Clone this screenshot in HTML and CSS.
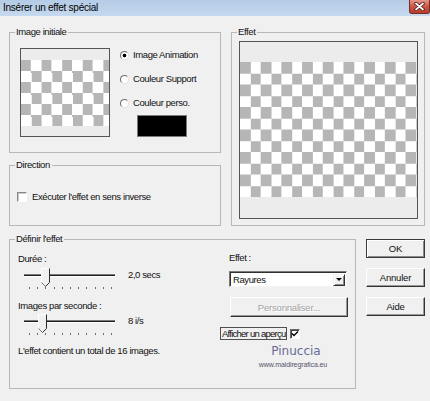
FILE: index.html
```html
<!DOCTYPE html>
<html lang="fr">
<head>
<meta charset="utf-8">
<title>Insérer un effet spécial</title>
<link rel="stylesheet" href="styles.css">
</head>
<body>
<div class="titlebar">
  <span class="title">Insérer un effet spécial</span>
  <span class="close" aria-label="Fermer">
    <svg width="11" height="9" viewBox="0 0 11 9">
      <path d="M2 1.5 L9 7.5 M9 1.5 L2 7.5" stroke="#4a1c16" stroke-width="3.4" stroke-linecap="round"/>
      <path d="M2 1.5 L9 7.5 M9 1.5 L2 7.5" stroke="#ffffff" stroke-width="1.7" stroke-linecap="round"/>
    </svg>
  </span>
</div>
<div class="content">
  <div class="top-row">
    <div class="left-col">
      <fieldset class="group">
        <legend>Image initiale</legend>
        <div class="initial-body">
          <div class="preview preview-small">
            <div class="strip strip-s1"></div>
            <div class="checker checker-small"></div>
            <div class="strip strip-s2"></div>
          </div>
          <div class="radios">
            <div class="radio-row"><span class="radio checked"></span><span>Image Animation</span></div>
            <div class="radio-row"><span class="radio"></span><span>Couleur Support</span></div>
            <div class="radio-row"><span class="radio"></span><span>Couleur perso.</span></div>
            <div class="swatch"></div>
          </div>
        </div>
      </fieldset>
      <fieldset class="group group-direction">
        <legend>Direction</legend>
        <div class="direction-body">
          <div class="check-row"><span class="checkbox"></span><span>Exécuter l'effet en sens inverse</span></div>
        </div>
      </fieldset>
    </div>
    <fieldset class="group group-effet">
      <legend>Effet</legend>
      <div class="effet-body">
        <div class="preview preview-large">
          <div class="strip strip-l1"></div>
          <div class="checker checker-large"></div>
          <div class="strip strip-l2"></div>
        </div>
      </div>
    </fieldset>
  </div>
  <div class="bottom-row">
    <fieldset class="group group-define">
      <legend>Définir l'effet</legend>
      <div class="define-body">
        <div class="define-left">
          <div class="lbl lbl-duree">Durée :</div>
          <div class="slider-row slider-row-1">
            <svg class="slider" width="100" height="23" viewBox="0 0 100 23">
              <rect x="1" y="7" width="91" height="1" fill="#7a7a7a"/>
              <rect x="1" y="8" width="91" height="1" fill="#1e1e1e"/>
              <rect x="1" y="9" width="91" height="1" fill="#ffffff"/>
              <g fill="#6a6a6a">
                <rect x="6" y="20" width="1" height="2"/><rect x="14" y="20" width="1" height="2"/>
                <rect x="22" y="20" width="1" height="2"/><rect x="31" y="20" width="1" height="2"/>
                <rect x="39" y="20" width="1" height="2"/><rect x="47" y="20" width="1" height="2"/>
                <rect x="55" y="20" width="1" height="2"/><rect x="63" y="20" width="1" height="2"/>
                <rect x="72" y="20" width="1" height="2"/><rect x="80" y="20" width="1" height="2"/>
                <rect x="88" y="20" width="1" height="2"/>
              </g>
              <g transform="translate(18,1)">
                <polygon points="0.5,0.5 8.5,0.5 8.5,14.5 4.5,18.5 0.5,14.5" fill="#f0f0f0"/>
                <polyline points="0.5,14.5 0.5,0.5 8.5,0.5" fill="none" stroke="#ffffff"/>
                <polyline points="0.5,14.5 4.5,18.5" fill="none" stroke="#777777"/>
                <polyline points="8.5,0.5 8.5,14.5 4.5,18.5" fill="none" stroke="#2a2a2a"/>
              </g>
            </svg>
            <span class="slider-val">2,0 secs</span>
          </div>
          <div class="lbl lbl-ips">Images par seconde :</div>
          <div class="slider-row slider-row-2">
            <svg class="slider" width="100" height="23" viewBox="0 0 100 23">
              <rect x="1" y="7" width="91" height="1" fill="#7a7a7a"/>
              <rect x="1" y="8" width="91" height="1" fill="#1e1e1e"/>
              <rect x="1" y="9" width="91" height="1" fill="#ffffff"/>
              <g fill="#6a6a6a">
                <rect x="6" y="20" width="1" height="2"/><rect x="14" y="20" width="1" height="2"/>
                <rect x="22" y="20" width="1" height="2"/><rect x="31" y="20" width="1" height="2"/>
                <rect x="39" y="20" width="1" height="2"/><rect x="47" y="20" width="1" height="2"/>
                <rect x="55" y="20" width="1" height="2"/><rect x="63" y="20" width="1" height="2"/>
                <rect x="72" y="20" width="1" height="2"/><rect x="80" y="20" width="1" height="2"/>
                <rect x="88" y="20" width="1" height="2"/>
              </g>
              <g transform="translate(15,1)">
                <polygon points="0.5,0.5 8.5,0.5 8.5,14.5 4.5,18.5 0.5,14.5" fill="#f0f0f0"/>
                <polyline points="0.5,14.5 0.5,0.5 8.5,0.5" fill="none" stroke="#ffffff"/>
                <polyline points="0.5,14.5 4.5,18.5" fill="none" stroke="#777777"/>
                <polyline points="8.5,0.5 8.5,14.5 4.5,18.5" fill="none" stroke="#2a2a2a"/>
              </g>
            </svg>
            <span class="slider-val">8 i/s</span>
          </div>
          <div class="lbl lbl-total">L'effet contient un total de 16 images.</div>
        </div>
        <div class="define-right">
          <div class="lbl lbl-effet">Effet :</div>
          <div class="select">
            <span class="select-text">Rayures</span>
            <span class="select-btn"><span class="tri"></span></span>
          </div>
          <div class="btn btn-disabled">Personnaliser...</div>
          <div class="preview-row">
            <span class="focus-label">Afficher un aperçu</span>
            <span class="checkbox checkbox-on">
              <svg width="8" height="8" viewBox="0 0 8 8"><polyline points="1,3.5 3,5.5 7,1.5" fill="none" stroke="#000" stroke-width="1.4"/></svg>
            </span>
          </div>
          <div class="watermark">Pinuccia</div>
          <div class="watermark-url">www.maidiregrafica.eu</div>
        </div>
      </div>
    </fieldset>
    <div class="buttons">
      <div class="btn btn-default">OK</div>
      <div class="btn">Annuler</div>
      <div class="btn">Aide</div>
    </div>
  </div>
</div>
</body>
</html>
```

FILE: styles.css
```css
* { box-sizing: border-box; }

html, body {
  margin: 0;
  padding: 0;
}

body {
  width: 430px;
  height: 401px;
  overflow: hidden;
  background: #f0f0f0;
  font-family: "Liberation Sans", Arial, sans-serif;
  font-size: 9.5px;
  letter-spacing: -0.4px;
  color: #111;
}

/* ---------- title bar ---------- */
.titlebar {
  height: 16px;
  display: flex;
  justify-content: space-between;
  align-items: flex-start;
  background: linear-gradient(#b5cce6, #c5d9ef);
}

.title {
  padding-left: 3px;
  font-size: 10px;
  letter-spacing: -0.25px;
  line-height: 15px;
  color: #000;
}

.close {
  width: 21px;
  height: 14px;
  display: flex;
  align-items: center;
  justify-content: center;
  background: linear-gradient(#e4988c, #cf5a4b 45%, #b83a2b);
  border: 1px solid #7a2a20;
  border-top: none;
  border-radius: 0 0 3px 3px;
}

/* ---------- layout ---------- */
.content {
  padding: 10px 5px 0 9px;
}

.top-row {
  display: flex;
  gap: 10px;
}

.left-col {
  width: 212px;
  display: flex;
  flex-direction: column;
}

.bottom-row {
  display: flex;
  gap: 10px;
  margin-top: 7px;
}

/* ---------- group boxes ---------- */
.group {
  margin: 0;
  padding: 0;
  min-width: 0;
  border: 1px solid #b8b8b8;
}

.group legend {
  margin-left: 5px;
  padding: 0 2px 0 1px;
  height: 12px;
  line-height: 12px;
}

.initial-body {
  display: flex;
  padding: 10px 0 15px 10px;
}

.group-direction {
  margin-top: 6px;
  flex: 1;
}

.direction-body {
  padding: 20px 0 0 7px;
}

.group-effet {
  width: 194px;
}

.effet-body {
  padding: 3px 6px 6px 7px;
}

/* ---------- previews ---------- */
.preview {
  border: 1px solid #555;
  background: #ececec;
  display: flex;
  flex-direction: column;
}

.preview-small {
  width: 90px;
  height: 89px;
}

.preview-large {
  width: 179px;
  height: 178px;
}

.strip { background: #ececec; }
.strip-s1 { height: 11px; }
.strip-s2 { height: 10px; }
.strip-l1 { height: 20px; }
.strip-l2 { height: 21px; }

.checker {
  background-color: #fff;
  background-image: conic-gradient(#fff 0 25%, #b6b6b6 0 50%, #fff 0 75%, #b6b6b6 0);
}

.checker-small {
  height: 66px;
  background-size: 20.6px 22px;
}

.checker-large {
  height: 135px;
  background-size: 20.7px 22.5px;
}

/* ---------- radios ---------- */
.radios {
  margin-left: 10px;
  display: flex;
  flex-direction: column;
  gap: 12px;
  padding-top: 1px;
}

.radio-row {
  height: 12px;
  line-height: 12px;
  display: flex;
  align-items: center;
  gap: 4px;
}

.radio {
  width: 9px;
  height: 9px;
  border-radius: 50%;
  background: #fff;
  border: 1px solid;
  border-color: #6a6a6a #e2e2e2 #e2e2e2 #6a6a6a;
}

.radio.checked {
  background: radial-gradient(circle, #000 0 1.6px, #fff 2.2px);
}

.swatch {
  margin: -6px 0 0 17px;
  width: 50px;
  height: 22px;
  background: #000;
  border: 1px solid #7a7a7a;
}

/* ---------- checkbox ---------- */
.check-row {
  height: 12px;
  display: flex;
  align-items: center;
  gap: 5px;
  line-height: 12px;
}

.checkbox {
  width: 10px;
  height: 10px;
  background: #fff;
  border: 1px solid;
  border-color: #8a8a8a #fff #fff #8a8a8a;
  box-shadow: inset 1px 1px 0 #c8c8c8;
  display: flex;
  align-items: center;
  justify-content: center;
}

.checkbox-on {
  border-color: #6a6a6a #fff #fff #6a6a6a;
  box-shadow: inset 1px 1px 0 #404040;
}

/* ---------- define effect ---------- */
.group-define {
  width: 347px;
}

.define-body {
  display: flex;
  padding: 0 6px 19px 8px;
}

.define-left {
  width: 202px;
}

.define-right {
  width: 129px;
}

.lbl {
  line-height: 11px;
  height: 11px;
}

.lbl-duree { margin-top: 8px; }
.lbl-ips { margin-top: 10px; }
.lbl-total { margin-top: 9px; }

.slider-row {
  display: flex;
  align-items: flex-start;
  gap: 5px;
  padding-left: 5px;
}

.slider-row-1 { margin-top: 3px; }
.slider-row-2 { margin-top: 2px; }

.slider { display: block; }

.slider-val {
  line-height: 16px;
}

.lbl-effet {
  margin: 7px 0 0 9px;
}

.select {
  margin: 8px 0 0 9px;
  width: 118px;
  height: 16px;
  display: flex;
  align-items: center;
  justify-content: space-between;
  background: #fff;
  border: 1px solid;
  border-color: #7a7a7a #f4f4f4 #f4f4f4 #7a7a7a;
  box-shadow: inset 1px 1px 0 #303030;
}

.select-text {
  padding-left: 3px;
  padding-top: 1px;
}

.select-btn {
  width: 12px;
  height: 12px;
  margin-right: 1px;
  margin-top: 1px;
  display: flex;
  align-items: center;
  justify-content: center;
  background: #f0f0f0;
  border: 1px solid;
  border-color: #f0f0f0 #303030 #303030 #f0f0f0;
  box-shadow: inset 1px 1px 0 #fff, inset -1px -1px 0 #8a8a8a;
}

.tri {
  width: 0;
  height: 0;
  border-left: 3px solid transparent;
  border-right: 3px solid transparent;
  border-top: 3px solid #000;
}

.btn {
  height: 19px;
  display: flex;
  align-items: center;
  justify-content: center;
  background: #f0f0f0;
  border: 1px solid;
  border-color: #fff #333 #333 #fff;
  box-shadow: inset -1px -1px 0 #9a9a9a;
  letter-spacing: -0.2px;
}

.btn-default {
  border-color: #3a3a3a;
  box-shadow: inset 1px 1px 0 #fff, inset -1px -1px 0 #8a8a8a;
}

.btn-disabled {
  margin: 10px 0 0 10px;
  width: 118px;
  height: 20px;
  color: #a3a3a3;
  text-shadow: 1px 1px 0 #fff;
}

.preview-row {
  margin-top: 10px;
  height: 13px;
  display: flex;
  align-items: center;
  gap: 3px;
}

.focus-label {
  height: 13px;
  line-height: 11px;
  padding: 0 1px;
  border: 1px solid #505050;
  letter-spacing: -0.75px;
}

.watermark {
  margin: 4px 0 0 23px;
  text-align: center;
  font-family: "DejaVu Sans", sans-serif;
  font-size: 12px;
  line-height: 14px;
  letter-spacing: 0;
  color: #6a6a96;
}

.watermark-url {
  margin: 3px 0 0 23px;
  padding-right: 6px;
  text-align: center;
  font-size: 7px;
  line-height: 8px;
  letter-spacing: -0.1px;
  color: #55556a;
}

/* ---------- buttons column ---------- */
.buttons {
  width: 59px;
  padding-top: 6px;
  display: flex;
  flex-direction: column;
  gap: 10px;
}
```
